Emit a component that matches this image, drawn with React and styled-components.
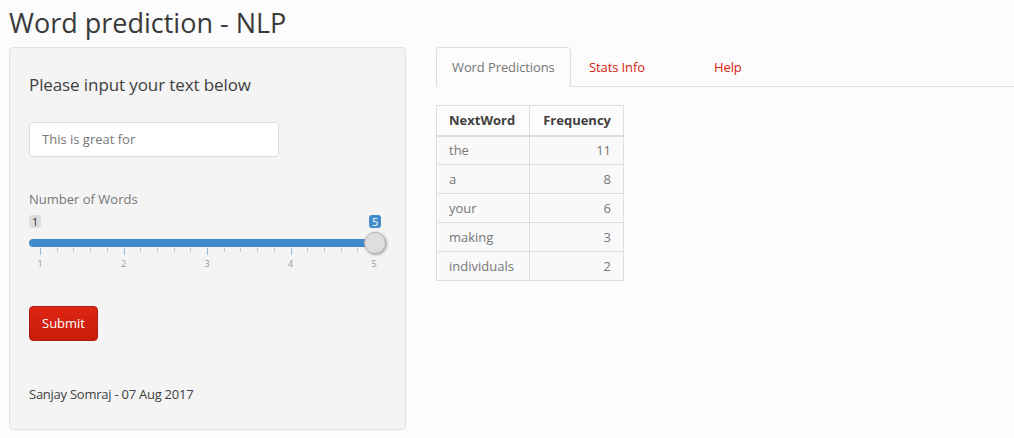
import React from "react";
import styled, { createGlobalStyle } from "styled-components";

const Global = createGlobalStyle`
  html, body { margin: 0; padding: 0; background: #fcfcfc; }
  body {
    font-family: "Open Sans", "Liberation Sans", sans-serif;
    font-size: 13px;
    line-height: 1.42857;
    color: #404040;
  }
  * { box-sizing: border-box; }
`;

const Page = styled.div`
  padding: 7px 0 0 9px;
  width: 1014px;
  height: 438px;
  overflow: hidden;
`;

const Title = styled.h2`
  margin: 0 0 9px 0;
  font-size: 27px;
  font-weight: 400;
  line-height: 1.15;
  color: #3a3a3a;
`;

const Row = styled.div`
  display: grid;
  grid-template-columns: 397px 1fr;
  column-gap: 30px;
  align-items: start;
`;

const Well = styled.div`
  height: 383px;
  background: #f4f4f4;
  border: 1px solid #e2e2e2;
  border-radius: 4px;
  padding: 19px;
  display: flex;
  flex-direction: column;
`;

const Heading = styled.h4`
  margin: 9px 0 0 0;
  font-size: 17px;
  font-weight: 400;
  line-height: 1.1;
  color: #404040;
  letter-spacing: -0.1px;
`;

const TextBox = styled.input`
  margin-top: 27px;
  width: 250px;
  height: 35px;
  padding: 7px 12px;
  border: 1px solid #dddddd;
  border-radius: 4px;
  background: #ffffff;
  font-family: inherit;
  font-size: 13px;
  color: #777777;
  outline: none;
`;

const Label = styled.div`
  margin-top: 33px;
  font-size: 13px;
  color: #777777;
  line-height: 18px;
`;

const Slider = styled.div`
  position: relative;
  height: 60px;
  margin-top: 7px;
`;

const Badge = styled.span`
  position: absolute;
  top: 0;
  left: ${(p) => p.$left}px;
  height: 13px;
  padding: 0 3px;
  border-radius: 3px;
  font-size: 11px;
  line-height: 13px;
  background: ${(p) => (p.$active ? "#428bca" : "#dddddd")};
  color: ${(p) => (p.$active ? "#ffffff" : "#333333")};
`;

const Track = styled.div`
  position: absolute;
  left: 0;
  right: 0;
  top: 24px;
  height: 8px;
  border-radius: 4px;
  background: #428bca;
`;

const Handle = styled.div`
  position: absolute;
  left: 335px;
  top: 17px;
  width: 22px;
  height: 22px;
  border-radius: 50%;
  background: #dedede;
  border: 1px solid #b5b5b5;
  box-shadow: 1px 1px 3px rgba(0, 0, 0, 0.3);
`;

const Tick = styled.span`
  position: absolute;
  top: 33px;
  left: ${(p) => p.$left}px;
  width: 1px;
  height: ${(p) => (p.$major ? 7 : 4)}px;
  background: ${(p) => (p.$major ? "#9fb8d6" : "#c4c4c4")};
`;

const TickLabel = styled.span`
  position: absolute;
  top: 43px;
  left: ${(p) => p.$left}px;
  width: 20px;
  margin-left: -10px;
  text-align: center;
  font-size: 9px;
  line-height: 12px;
  color: #999999;
`;

const SubmitButton = styled.button`
  margin-top: 31px;
  align-self: flex-start;
  height: 35px;
  padding: 0 12px;
  border: 1px solid #b31c0c;
  border-radius: 4px;
  background: linear-gradient(#dc2512, #c91d0c);
  color: #ffffff;
  font-family: inherit;
  font-size: 13px;
`;

const Footer = styled.div`
  margin-top: 44px;
  font-size: 13px;
  letter-spacing: -0.25px;
  color: #404040;
`;

const Tabs = styled.div`
  display: flex;
  border-bottom: 1px solid #dddddd;
  height: 40px;
`;

const Tab = styled.div`
  width: ${(p) => p.$w}px;
  margin-right: 2px;
  height: 40px;
  padding: 10px 15px;
  line-height: 18px;
  font-size: 13px;
  white-space: nowrap;
  letter-spacing: -0.1px;
  border: 1px solid ${(p) => (p.$active ? "#dddddd" : "transparent")};
  border-bottom-color: ${(p) => (p.$active ? "#fcfcfc" : "transparent")};
  border-radius: 4px 4px 0 0;
  background: ${(p) => (p.$active ? "#fcfcfc" : "transparent")};
  color: ${(p) => (p.$active ? "#777777" : "#d9230f")};
  margin-bottom: -1px;
`;

const Table = styled.table`
  margin-top: 18px;
  border-collapse: collapse;
  font-size: 13px;
`;

const Th = styled.th`
  height: 30px;
  padding: 0 12px;
  border: 1px solid #dddddd;
  border-bottom-width: 2px;
  text-align: ${(p) => (p.$right ? "right" : "left")};
  font-weight: 700;
  color: #404040;
  width: ${(p) => p.$w}px;
`;

const Td = styled.td`
  height: 29px;
  padding: 0 12px;
  border: 1px solid #dddddd;
  text-align: ${(p) => (p.$right ? "right" : "left")};
  color: #777777;
  background: #f9f9f9;
`;

const rows = [
  ["the", 11],
  ["a", 8],
  ["your", 6],
  ["making", 3],
  ["individuals", 2],
];

const majors = [11, 94.5, 178, 261.5, 345];

export default function App() {
  const ticks = [];
  for (let i = 0; i < 4; i++) {
    for (let j = 1; j < 5; j++) {
      ticks.push(majors[i] + (j * (majors[i + 1] - majors[i])) / 5);
    }
  }
  return (
    <Page>
      <Global />
      <Title>Word prediction - NLP</Title>
      <Row>
        <Well>
          <Heading>Please input your text below</Heading>
          <TextBox defaultValue="This is great for" />
          <Label>Number of Words</Label>
          <Slider>
            <Badge $left={0}>1</Badge>
            <Badge $left={340} $active>5</Badge>
            <Track />
            {majors.map((x, i) => (
              <Tick key={"m" + i} $left={x} $major />
            ))}
            {ticks.map((x, i) => (
              <Tick key={"t" + i} $left={Math.round(x)} />
            ))}
            {majors.map((x, i) => (
              <TickLabel key={"l" + i} $left={x}>
                {i + 1}
              </TickLabel>
            ))}
            <Handle />
          </Slider>
          <SubmitButton>Submit</SubmitButton>
          <Footer>Sanjay Somraj - 07 Aug 2017</Footer>
        </Well>
        <div>
          <Tabs>
            <Tab $active $w={135}>Word Predictions</Tab>
            <Tab $w={123}>Stats Info</Tab>
            <Tab $w={80}>Help</Tab>
          </Tabs>
          <Table>
            <thead>
              <tr>
                <Th $w={93}>NextWord</Th>
                <Th $w={94} $right>Frequency</Th>
              </tr>
            </thead>
            <tbody>
              {rows.map(([w, f]) => (
                <tr key={w}>
                  <Td>{w}</Td>
                  <Td $right>{f}</Td>
                </tr>
              ))}
            </tbody>
          </Table>
        </div>
      </Row>
    </Page>
  );
}
